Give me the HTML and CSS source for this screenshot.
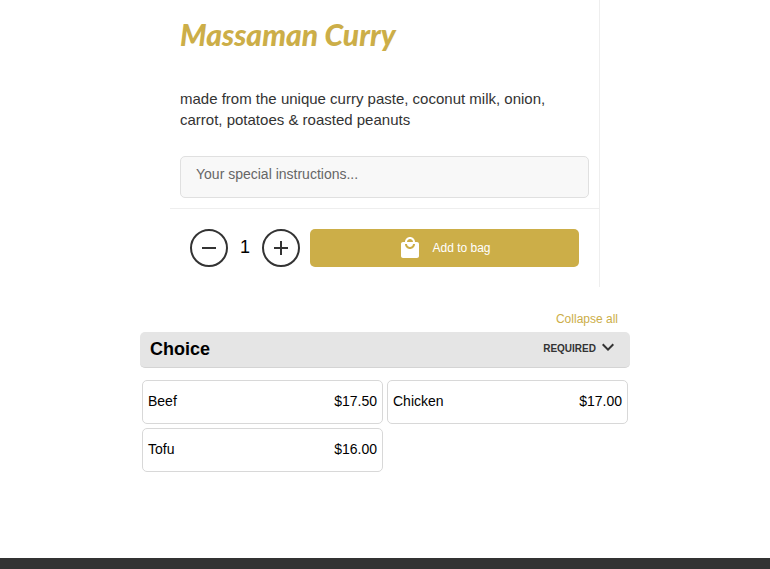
FILE: index.html
```html
<!DOCTYPE html>
<html lang="en">
<head>
<meta charset="utf-8">
<meta name="viewport" content="width=device-width, initial-scale=1">
<title>Massaman Curry</title>
<link rel="stylesheet" href="styles.css">
</head>
<body>
<main class="page">
  <section class="item">
    <div class="details">
      <h1 class="title">Massaman Curry</h1>
      <p class="description">made from the unique curry paste, coconut milk, onion, carrot, potatoes &amp; roasted peanuts</p>
      <textarea class="notes" rows="1" aria-label="Special instructions" placeholder="Your special instructions..."></textarea>
    </div>
    <div class="order">
      <button class="step" type="button" aria-label="Decrease quantity"><svg width="14" height="14" viewBox="0 0 14 14"><path d="M0 7h14"/></svg></button>
      <output class="quantity">1</output>
      <button class="step" type="button" aria-label="Increase quantity"><svg width="14" height="14" viewBox="0 0 14 14"><path d="M0 7h14M7 0v14"/></svg></button>
      <button class="add" type="button">
        <svg width="24" height="24" viewBox="0 0 24 24" fill="currentColor" aria-hidden="true"><path d="M19 6h-2c0-2.76-2.24-5-5-5S7 3.24 7 6H5c-1.1 0-1.99.9-1.99 2L3 20c0 1.1.9 2 2 2h14c1.1 0 2-.9 2-2V8c0-1.1-.9-2-2-2zm-7-3c1.66 0 3 1.34 3 3H9c0-1.66 1.34-3 3-3zm0 10c-2.76 0-5-2.24-5-5h2c0 1.66 1.34 3 3 3s3-1.34 3-3h2c0 2.76-2.24 5-5 5z"/></svg>
        <span>Add to bag</span>
      </button>
    </div>
  </section>
  <section class="options">
    <button class="collapse" type="button">Collapse all</button>
    <header class="group">
      <h2 class="group-name">Choice</h2>
      <button class="toggle" type="button" aria-expanded="true">REQUIRED<svg width="24" height="24" viewBox="0 0 24 24" fill="currentColor" aria-hidden="true"><path d="M16.59 8.59 12 13.17 7.41 8.59 6 10l6 6 6-6z"/></svg></button>
    </header>
    <div class="choices">
      <button class="choice" type="button"><span>Beef</span><span>$17.50</span></button>
      <button class="choice" type="button"><span>Chicken</span><span>$17.00</span></button>
      <button class="choice" type="button"><span>Tofu</span><span>$16.00</span></button>
    </div>
  </section>
</main>
<footer class="footer"></footer>
</body>
</html>
```
FILE: styles.css
```css
* {
  box-sizing: border-box;
}

body {
  margin: 0;
  min-height: 100vh;
  display: flex;
  flex-direction: column;
  background: #fff;
  color: #000;
  font-family: "Liberation Sans", Arial, sans-serif;
}

button {
  margin: 0;
  padding: 0;
  border: 0;
  background: none;
  color: inherit;
  font: inherit;
  cursor: pointer;
}

.page {
  flex: 1;
  width: 100%;
  max-width: 490px;
  margin: 0 auto;
  padding-bottom: 86px;
}

.item {
  margin: 0 30px;
  border-right: 1px solid #eee;
}

.details {
  display: flex;
  flex-direction: column;
  padding: 10px;
  border-bottom: 1px solid #eee;
}

.title {
  margin: 0 0 30px;
  color: #ccae48;
  font-family: Lato, sans-serif;
  font-size: 30px;
  font-style: italic;
  font-weight: 900;
  line-height: 48px;
  white-space: nowrap;
}

.description {
  margin: 0 0 26px;
  color: #333;
  font-size: 15px;
  line-height: 21px;
}

.notes {
  width: 100%;
  height: 42px;
  padding: 9px 15px;
  border: 1px solid #e0e0e0;
  border-radius: 5px;
  background: #f8f8f8;
  color: #333;
  font: 14px/16px "Liberation Sans", Arial, sans-serif;
  resize: none;
}

.notes::placeholder {
  color: #666;
}

.order {
  display: flex;
  align-items: center;
  padding: 20px;
}

.step {
  display: flex;
  align-items: center;
  justify-content: center;
  width: 38px;
  height: 38px;
  border: 2px solid #333;
  border-radius: 50%;
}

.step svg {
  fill: none;
  stroke: #333;
  stroke-width: 2;
}

.quantity {
  width: 34px;
  padding-bottom: 2px;
  font-size: 18px;
  text-align: center;
}

.add {
  flex: 1;
  display: flex;
  align-items: center;
  justify-content: center;
  gap: 10px;
  height: 38px;
  margin-left: 10px;
  border-radius: 5px;
  background: #ccae48;
  color: #fff;
  font-size: 12px;
}

.options {
  display: flex;
  flex-direction: column;
  padding-top: 24px;
}

.collapse {
  align-self: flex-end;
  margin: 0 12px 5px 0;
  color: #ccae48;
  font-size: 12px;
  line-height: 16px;
}

.group {
  display: flex;
  align-items: center;
  justify-content: space-between;
  height: 36px;
  padding: 0 10px 2px;
  border-bottom: 1px solid #d4d4d4;
  border-radius: 5px;
  background: #e5e5e5;
}

.group-name {
  margin: 0;
  font-size: 18px;
  line-height: 24px;
}

.toggle {
  display: flex;
  align-items: center;
  color: #333;
  font-size: 10px;
  font-weight: 700;
}

.toggle svg {
  margin-bottom: 3px;
}

.choices {
  display: grid;
  grid-template-columns: repeat(2, 1fr);
  gap: 4px;
  padding: 12px 2px 0;
}

.choice {
  display: flex;
  align-items: center;
  justify-content: space-between;
  height: 44px;
  padding: 0 5px 2px;
  border: 1px solid #d8d8d8;
  border-radius: 5px;
  font-size: 14px;
}

.footer {
  height: 11px;
  background: #333;
}
```
